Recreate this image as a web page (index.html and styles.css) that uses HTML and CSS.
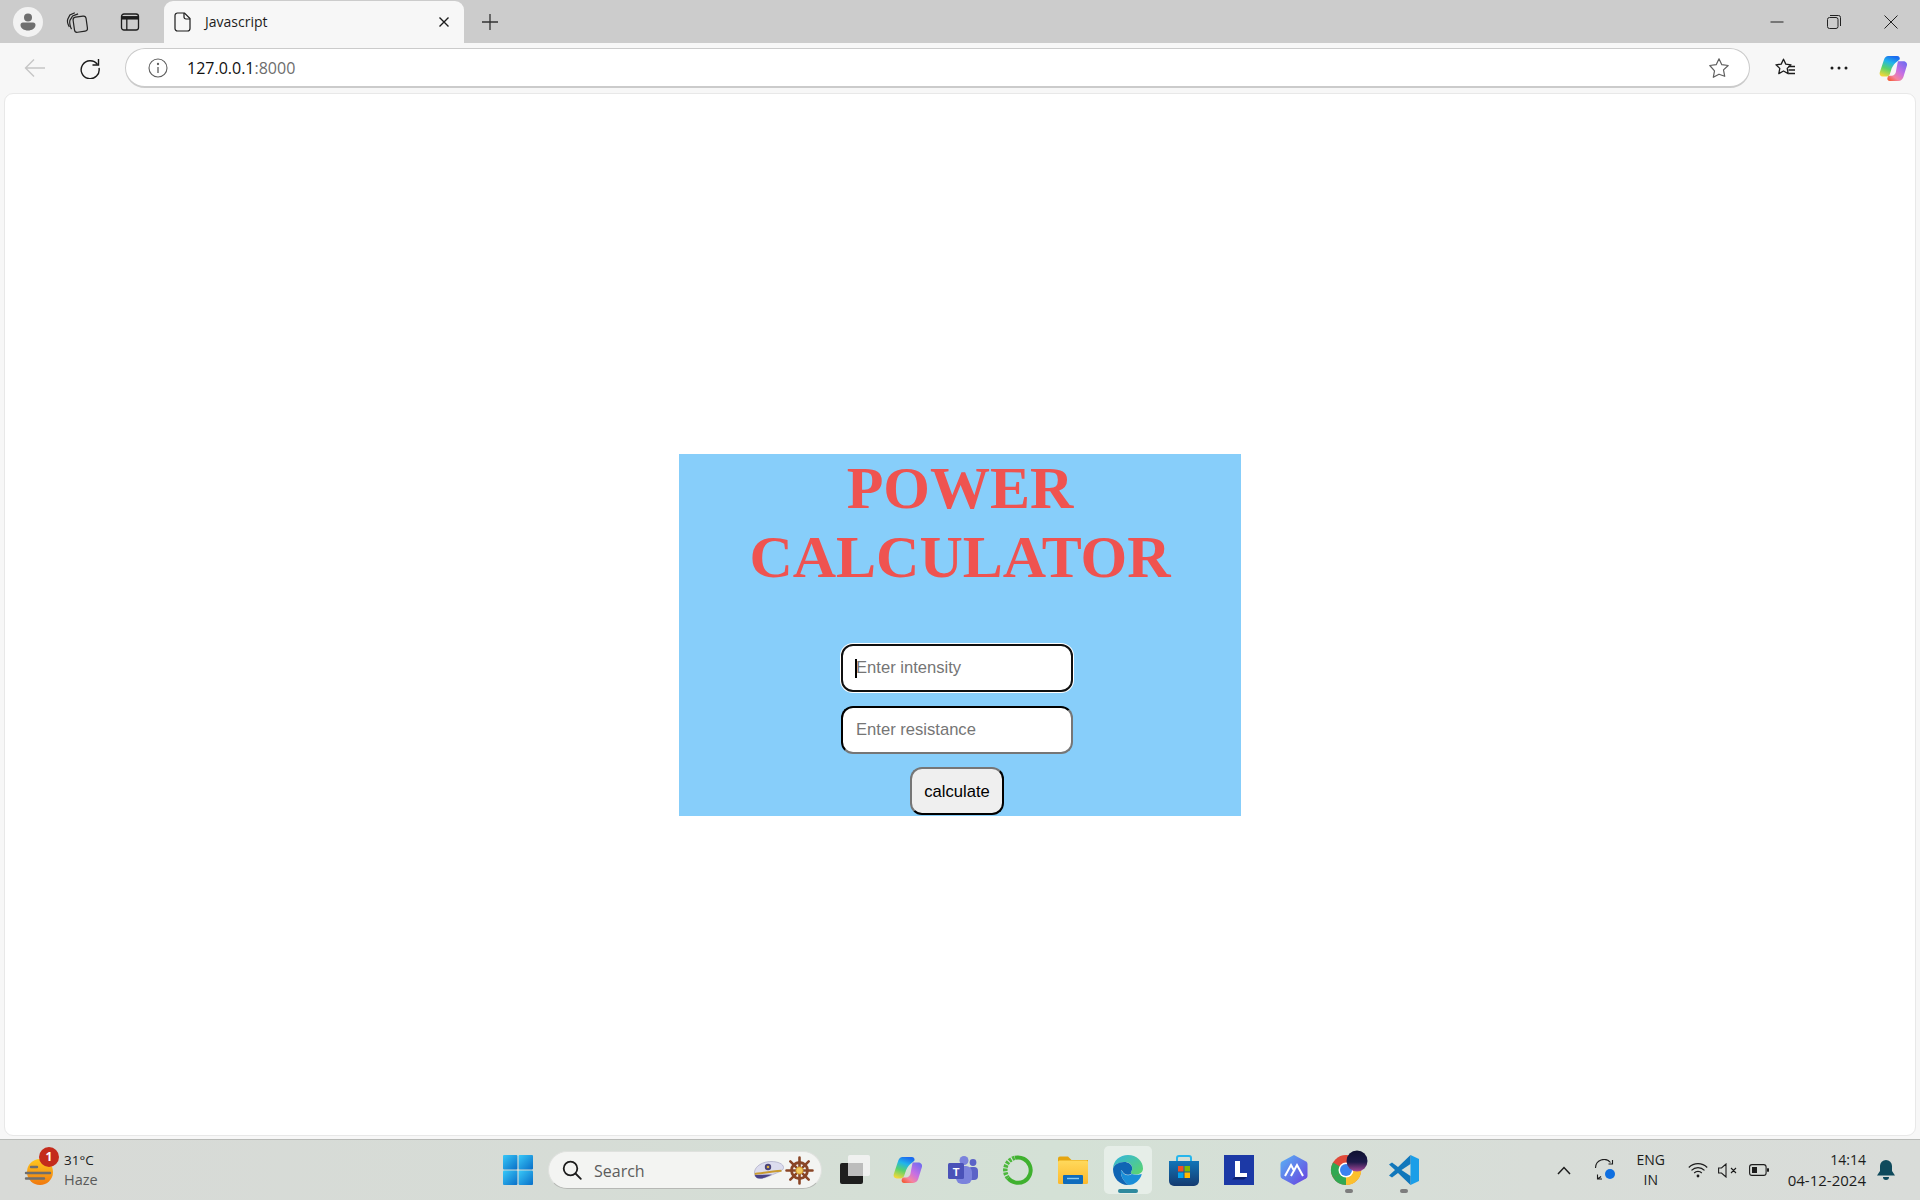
FILE: index.html
```html
<!DOCTYPE html>
<html lang="en">
<head>
<meta charset="utf-8">
<title>Javascript</title>
<link rel="stylesheet" href="styles.css">
</head>
<body>
<svg class="defs" width="0" height="0" aria-hidden="true">
  <defs>
    <linearGradient id="copA" x1=".6" y1="0" x2=".25" y2="1"><stop offset="0" stop-color="#1c6cf0"/><stop offset=".3" stop-color="#22b4ea"/><stop offset=".62" stop-color="#5ad26a"/><stop offset="1" stop-color="#f4d83a"/></linearGradient>
    <linearGradient id="copB" x1=".9" y1="0" x2=".1" y2="1"><stop offset="0" stop-color="#6d6cf0"/><stop offset=".45" stop-color="#c66fe4"/><stop offset=".75" stop-color="#f585a0"/><stop offset="1" stop-color="#f4582e"/></linearGradient>
    <linearGradient id="sun" x1="0" y1="0" x2="0" y2="1"><stop offset="0" stop-color="#ffc81e"/><stop offset="1" stop-color="#f0780f"/></linearGradient>
    <linearGradient id="win" x1="0" y1="0" x2="1" y2="1"><stop offset="0" stop-color="#38c8f8"/><stop offset="1" stop-color="#0a6fc8"/></linearGradient>
    <linearGradient id="folder" x1="0" y1="0" x2="0" y2="1"><stop offset="0" stop-color="#ffd95c"/><stop offset="1" stop-color="#fdb92c"/></linearGradient>
    <linearGradient id="edge" x1="0" y1="0" x2="1" y2="1"><stop offset="0" stop-color="#32b4e0"/><stop offset="1" stop-color="#5ed66a"/></linearGradient>
    <linearGradient id="store" x1="0" y1="0" x2="0" y2="1"><stop offset="0" stop-color="#1275b8"/><stop offset="1" stop-color="#143a70"/></linearGradient>
    <linearGradient id="hex" x1="0" y1="0" x2="1" y2="1"><stop offset="0" stop-color="#58b4f4"/><stop offset="1" stop-color="#6a3fe0"/></linearGradient>
    <linearGradient id="blob" x1="0" y1="0" x2="0" y2="1"><stop offset="0" stop-color="#0e1030"/><stop offset=".55" stop-color="#1d1a4a"/><stop offset="1" stop-color="#a8489a"/></linearGradient>
    <g id="copilot-shape">
      <path d="M21 7h6c2.500 0 4.500 2 4 4.500l-4 13c-.8 2.500-2.700 4.500-5.500 4.500H12c-2.200 0-3.300-2-2.700-3.800l1-2.200h3.500c2.500 0 4-1.500 4.700-3.500L20.500 9z" fill="url(#copB)"/>
      <path d="M10 1h10c2.500 0 3.500 2 2.800 4L18 9c-2 2-4 5-5 9l-1 3c-.7 2-2.200 3-4 3H4c-2.500 0-4-2-3.300-4.500L5.500 5C6.300 2.500 8 1 10 1z" fill="url(#copA)"/>
    </g>
  </defs>
</svg>

<header class="tabstrip">
  <div class="strip-left">
    <span class="avatar">
      <svg width="20" height="20" viewBox="0 0 20 20"><circle cx="10" cy="5.500" r="4" fill="#6f6f6f"/><path d="M2.500 13a2.500 2.500 0 0 1 2.500-2.500h10a2.500 2.500 0 0 1 2.500 2.500c0 3.400-3.600 5.500-7.500 5.500S2.500 16.400 2.500 13z" fill="#6f6f6f"/></svg>
    </span>
    <span class="strip-btn">
      <svg width="24" height="24" viewBox="0 0 22 22" fill="none" stroke="#222" stroke-width="1.100"><path d="M4 15.500C2.500 13 2 10 2.500 8.500L4.500 4.500 9 2.500"/><path d="M6 17.500C4.500 15 4 11 4.500 9.500L7 5.500 12 3.500"/><rect x="8" y="6" width="12" height="14" rx="2.500" transform="rotate(-8 14 13)"/></svg>
    </span>
    <span class="strip-btn">
      <svg width="20" height="20" viewBox="0 0 20 20" fill="none" stroke="#1c1c1c" stroke-width="1.300"><rect x="1.500" y="2" width="17" height="16" rx="2.500"/><path d="M1.500 5.800h17" stroke-width="3.500" stroke="#1c1c1c"/><path d="M6.800 6v12"/></svg>
    </span>
  </div>
  <div class="tab">
    <svg class="tab-doc" width="18" height="20" viewBox="0 0 18 20" fill="none" stroke="#1c1c1c" stroke-width="1.200"><path d="M3.500 1h7L16 6.500V16.500a2.500 2.500 0 0 1-2.500 2.500h-10A2.500 2.500 0 0 1 1 16.500v-13A2.500 2.500 0 0 1 3.500 1z"/><path d="M10 1v4a2 2 0 0 0 2 2h4"/></svg>
    <span class="tab-title">Javascript</span>
    <svg class="tab-close" width="12" height="12" viewBox="0 0 12 12" stroke="#1c1c1c" stroke-width="1.400"><path d="M1.500 1.500l9 9M10.500 1.500l-9 9"/></svg>
  </div>
  <span class="new-tab">
    <svg width="18" height="18" viewBox="0 0 18 18" stroke="#333" stroke-width="1.300"><path d="M9 1v16M1 9h16"/></svg>
  </span>
  <div class="win-controls">
    <svg width="14" height="14" viewBox="0 0 14 14" stroke="#222" stroke-width="1"><path d="M.500 7h13"/></svg>
    <svg width="14" height="14" viewBox="0 0 14 14" fill="none" stroke="#222" stroke-width="1"><rect x=".500" y="2.500" width="10.500" height="11" rx="2"/><path d="M3 .500h8.500a2 2 0 0 1 2 2V11"/></svg>
    <svg width="14" height="14" viewBox="0 0 14 14" stroke="#222" stroke-width="1"><path d="M.500 .500l13 13M13.500 .500l-13 13"/></svg>
  </div>
</header>

<nav class="toolbar">
  <span class="tool-btn back">
    <svg width="22" height="20" viewBox="0 0 22 20" fill="none" stroke="#c6c6c6" stroke-width="1.400"><path d="M21 10H1.500M10 1.500L1.500 10l8.500 8.500"/></svg>
  </span>
  <span class="tool-btn reload">
    <svg width="22" height="22" viewBox="0 0 22 22" fill="none" stroke="#1c1c1c" stroke-width="1.400"><path d="M18.500 7.500A9 9 0 1 0 20 11"/><path d="M19.500 2v6h-6"/></svg>
  </span>
  <div class="address">
    <svg class="addr-info" width="20" height="20" viewBox="0 0 20 20" fill="none" stroke="#5f5f5f" stroke-width="1.100"><circle cx="10" cy="10" r="9"/><path d="M10 9v6" stroke-width="1.300"/><circle cx="10" cy="6" r=".6" fill="#5f5f5f"/></svg>
    <span class="url"><span class="url-host">127.0.0.1</span><span class="url-port">:8000</span></span>
    <svg class="addr-star" width="22" height="22" viewBox="0 0 22 22" fill="none" stroke="#5f5f5f" stroke-width="1.200" stroke-linejoin="round"><path d="M11 1.800l2.800 5.900 6.400.8-4.700 4.400 1.200 6.400L11 17.200l-5.700 3.100 1.200-6.400L1.800 8.500l6.400-.8z"/></svg>
  </div>
  <span class="tool-btn fav">
    <svg width="22" height="22" viewBox="0 0 22 22" fill="none" stroke="#1c1c1c" stroke-width="1.300" stroke-linejoin="round"><path d="M9.500 2.200l2.300 4.900 5.200.7-3.800 3.600 1 5.200-4.700-2.600-4.700 2.600 1-5.200-3.800-3.600 5.200-.7z"/><path d="M14.500 9.500h6.500M14.500 13h6.500M14.500 16.500h6.500"/></svg>
  </span>
  <span class="tool-btn dots">
    <svg width="18" height="4" viewBox="0 0 18 4" fill="#1c1c1c"><circle cx="2" cy="2" r="1.500"/><circle cx="9" cy="2" r="1.500"/><circle cx="16" cy="2" r="1.500"/></svg>
  </span>
  <span class="tool-btn copilot">
    <svg width="29" height="27" viewBox="0 0 32 30"><use href="#copilot-shape"/></svg>
  </span>
</nav>

<main class="viewport">
  <section class="card">
    <h1 class="title">POWER<br>CALCULATOR</h1>
    <form class="form">
      <div class="field">
        <input class="entry entry-focus" type="text" placeholder="Enter intensity">
        <span class="caret"></span>
      </div>
      <input class="entry" type="text" placeholder="Enter resistance">
      <button class="calc" type="button">calculate</button>
    </form>
  </section>
</main>

<footer class="taskbar">
  <div class="weather">
    <span class="weather-icon">
      <svg width="30" height="30" viewBox="0 0 30 30"><circle cx="16" cy="16" r="13" fill="url(#sun)"/><g stroke="#6e6e6e" stroke-width="2.400" stroke-linecap="round"><path d="M7 11h6M2 17h24M2 22.500h18"/></g></svg>
      <span class="badge">1</span>
    </span>
    <span class="weather-text"><span class="temp">31°C</span><span class="cond">Haze</span></span>
  </div>

  <div class="apps">
    <span class="app app-win">
      <svg width="30" height="30" viewBox="0 0 30 30" fill="url(#win)"><rect x="0" y="0" width="14.400" height="14.400" rx="1"/><rect x="15.600" y="0" width="14.400" height="14.400" rx="1"/><rect x="0" y="15.600" width="14.400" height="14.400" rx="1"/><rect x="15.600" y="15.600" width="14.400" height="14.400" rx="1"/></svg>
    </span>
    <div class="search">
      <svg class="search-glass" width="20" height="20" viewBox="0 0 20 20" fill="none" stroke="#1c1c1c" stroke-width="1.800"><circle cx="8.500" cy="8.500" r="6.800"/><path d="M13.500 13.500L18.800 18.800" stroke-linecap="round"/></svg>
      <span class="search-label">Search</span>
      <svg class="search-hat" width="30" height="18" viewBox="0 0 30 18"><path d="M.500 11C1 5 9 .500 17 .500c7 0 12.500 2.500 12.500 6 0 2.500-3 4-7 5.500-5 1.800-11 5.500-17 5.500C2 17.500.2 15 .500 11z" fill="#dcdcee" stroke="#a8a8c4" stroke-width=".7"/><path d="M.800 13C8 12 18 10.500 27.500 9.800" fill="none" stroke="#c99a2e" stroke-width="2"/><path d="M.800 14C1.500 16.500 3 17.500 6 17.500c4 0 8-2 12-4z" fill="#4a4488"/><circle cx="14" cy="6" r="3.200" fill="#4a4378"/><circle cx="14" cy="6" r="1.300" fill="#e0b03a"/></svg>
      <svg class="search-wheel" width="29" height="29" viewBox="0 0 29 29" fill="none" stroke="#8a4526"><g stroke-width="2.600" stroke-linecap="round"><path d="M14.500 1.500v26M1.500 14.500h26M5.300 5.300l18.400 18.400M23.700 5.300L5.300 23.700"/></g><circle cx="14.500" cy="14.500" r="8" stroke-width="2.800"/><circle cx="14.500" cy="14.500" r="3.500" fill="#f0c860" stroke="#d8a030" stroke-width="1"/></svg>
    </div>
    <span class="app app-cube">
      <svg width="30" height="30" viewBox="0 0 30 30"><rect x="0" y="8" width="23" height="21" rx="2" fill="#1e1e1e"/><rect x="8" y="0" width="22" height="21" rx="2" fill="#f4f4f4" fill-opacity=".85"/><rect x="8" y="8" width="15" height="13" fill="#bdbdbd"/></svg>
    </span>
    <span class="app">
      <svg width="30" height="28" viewBox="0 0 32 30"><use href="#copilot-shape"/></svg>
    </span>
    <span class="app">
      <svg width="30" height="30" viewBox="0 0 30 30"><circle cx="25" cy="7.500" r="3.400" fill="#5b63c7"/><rect x="20" y="12" width="10" height="13" rx="4" fill="#5b63c7"/><circle cx="16" cy="5.500" r="4.500" fill="#7b83dc"/><rect x="8" y="11" width="16" height="18" rx="6" fill="#7b83dc"/><rect x="0" y="8" width="16" height="16" rx="1.500" fill="#4a52b8"/><text class="teams-t" x="8" y="20.500" text-anchor="middle">T</text></svg>
    </span>
    <span class="app">
      <svg width="30" height="30" viewBox="0 0 30 30" fill="none"><path d="M12 2.800A12.700 12.700 0 1 1 5 23" stroke="#3fb12f" stroke-width="4"/><path d="M5 23A12.700 12.700 0 0 1 12 2.800" stroke="#4cb83c" stroke-width="4.500" stroke-dasharray="2.600 1.100"/></svg>
    </span>
    <span class="app">
      <svg width="30" height="28" viewBox="0 0 30 28"><path d="M0 2.500A2 2 0 0 1 2 .500h8l3.500 3.500H30v6H0z" fill="#e5a50f"/><rect x="0" y="4.500" width="30" height="23.500" rx="1.500" fill="url(#folder)"/><rect x="5" y="19" width="20" height="9" rx="1" fill="#0f6cbd"/><path d="M9 22.500h12" stroke="#8ccbf0" stroke-width="1.400"/></svg>
    </span>
    <span class="app app-edge">
      <svg width="32" height="32" viewBox="0 0 32 32"><path d="M1 15C1 6.500 8 1 16 1c8.500 0 15 6 15 13.500 0 3.500-3 6-7 6-3 0-5.200-1-5.200-2.300 0-.8 1.400-1.200 1.400-3.700C20.200 10.500 17 8 13 8 6.500 8 1.500 11 1 15z" fill="url(#edge)"/><path d="M1 15c.5-4 5.500-7 11-7 4.500 0 8.200 2.500 8.200 6.500 0 2.500-1.400 2.900-1.400 3.700 0 .6.400 1 1 1.300-3.500 2.500-8 1-9.600-2.500C8.800 14 8 20 11 25c1.200 2 3 3.800 5.500 6C8 31.500 1 24.500 1 15z" fill="#1065b4"/><path d="M16.500 31c-2.500-2.200-4.300-4-5.500-6C8 20 8.800 14 10.200 17.500c1.600 3.500 6.100 5 9.600 2.500 3 1.200 7.500.8 10 0-1.500 6-7 11-13.300 11z" fill="#1a8ed8"/></svg>
      <span class="edge-bar"></span>
    </span>
    <span class="app">
      <svg width="30" height="32" viewBox="0 0 30 32"><path d="M8 7V4a2 2 0 0 1 2-2h10a2 2 0 0 1 2 2v3" fill="none" stroke="#27b6ec" stroke-width="2"/><path d="M0 7h30v20a5 5 0 0 1-5 5H5a5 5 0 0 1-5-5z" fill="url(#store)"/><rect x="9" y="12" width="5.500" height="5.500" fill="#f25022"/><rect x="15.500" y="12" width="5.500" height="5.500" fill="#7fba00"/><rect x="9" y="18.500" width="5.500" height="5.500" fill="#00a4ef"/><rect x="15.500" y="18.500" width="5.500" height="5.500" fill="#ffb900"/></svg>
    </span>
    <span class="app">
      <svg width="30" height="30" viewBox="0 0 30 30"><rect width="30" height="30" fill="#1c39a6"/><path d="M11 6h5v12h7v4H11z" fill="#fff"/><path d="M11 22h12l-3 2.500H8z" fill="#0c1f6c"/></svg>
    </span>
    <span class="app">
      <svg width="28" height="30" viewBox="0 0 28 30"><path d="M14 0l12 6.500a3 3 0 0 1 1.500 2.500v12a3 3 0 0 1-1.500 2.500L14 30 2 23.500A3 3 0 0 1 .500 21V9A3 3 0 0 1 2 6.500z" fill="url(#hex)"/><path d="M5 21l6-11 3.500 6.500M11 21l6-11 6 11" fill="none" stroke="#fff" stroke-width="2"/></svg>
    </span>
    <span class="app app-chrome">
      <svg width="48" height="40" viewBox="0 0 48 40"><g transform="translate(5 8)"><circle cx="15" cy="15" r="15" fill="#e04a3a"/><path d="M15 15L2 22.500A15 15 0 0 0 15 30z" fill="#31a852"/><path d="M2 7.500A15 15 0 0 0 2 22.500L15 15z" fill="#31a852"/><path d="M15 15l15-3a15 15 0 0 1-15 18z" fill="#fbc02d"/><circle cx="15" cy="15" r="7.500" fill="#fff"/><circle cx="15" cy="15" r="6" fill="#3a82f0"/></g><circle cx="31" cy="14" r="10.500" fill="url(#blob)"/></svg>
      <span class="run-dot"></span>
    </span>
    <span class="app app-code">
      <svg width="30" height="30" viewBox="0 0 30 30"><path d="M21.500 0l8.500 4v22l-8.500 4z" fill="#1b9ee8"/><path d="M21.500 0L9 12 3 7.500 0 9.500 6 15l-6 5.500 3 2L9 18l12.500 12V21L12.500 15l9-6z" fill="#1177bb"/></svg>
      <span class="run-dot"></span>
    </span>
  </div>

  <div class="tray">
    <svg class="tray-chev" width="14" height="9" viewBox="0 0 14 9" fill="none" stroke="#1c1c1c" stroke-width="1.500"><path d="M1 8l6-6.500L13 8"/></svg>
    <svg class="tray-sync" width="22" height="22" viewBox="0 0 22 22" fill="none" stroke="#1c1c1c" stroke-width="1.100"><path d="M1.500 9A8.500 8.500 0 0 1 16.500 3.500M18.500 1v4h-4M8 20H3.500v-4.500M3.500 19.500A8 8 0 0 0 7 17.500"/><circle cx="16" cy="15" r="5" fill="#0f6fe0" stroke="none"/></svg>
    <span class="lang"><span>ENG</span><span>IN</span></span>
    <svg class="tray-wifi" width="20" height="16" viewBox="0 0 20 16" fill="none" stroke="#1c1c1c" stroke-width="1.200"><path d="M.800 5.500a13 13 0 0 1 18.400 0M3.500 8.300a9.200 9.200 0 0 1 13 0M6.200 11a5.400 5.400 0 0 1 7.600 0"/><circle cx="10" cy="14" r="1.400" fill="#1c1c1c" stroke="none"/></svg>
    <svg class="tray-vol" width="20" height="15" viewBox="0 0 20 15" fill="none" stroke="#1c1c1c" stroke-width="1.100"><path d="M.600 5h2.900L8 1v13L3.500 10H.600zM13 5l5 5M18 5l-5 5"/></svg>
    <svg class="tray-bat" width="20" height="12" viewBox="0 0 20 12" fill="none" stroke="#1c1c1c" stroke-width="1.100"><rect x=".600" y=".600" width="16.500" height="10.800" rx="2.400"/><rect x="3" y="3" width="5" height="6" fill="#1c1c1c" stroke="none"/><rect x="18" y="4.300" width="2" height="3.400" fill="#1c1c1c" stroke="none"/></svg>
    <span class="clock"><span class="clock-time">14:14</span><span class="clock-date">04-12-2024</span></span>
    <svg class="tray-bell" width="18" height="20" viewBox="0 0 18 20" fill="#0f4a5c"><path d="M9 0a6 6 0 0 1 6 6v5l3 4.500H0L3 11V6a6 6 0 0 1 6-6z"/><path d="M6 17h6a3 3 0 0 1-6 0z"/></svg>
  </div>
</footer>
</body>
</html>
```

FILE: styles.css
```css
* { box-sizing: border-box; }

html, body { margin: 0; height: 100%; }

body {
  width: 1920px;
  height: 1200px;
  overflow: hidden;
  display: flex;
  flex-direction: column;
  background: #f7f7f7;
  font-family: "Open Sans", "Liberation Sans", sans-serif;
  color: #1c1c1c;
}

.defs { display: block; height: 0; }

/* Tab strip */
.tabstrip {
  height: 43px;
  flex: none;
  display: flex;
  align-items: flex-end;
  background: #cccccc;
}

.strip-left {
  width: 164px;
  height: 43px;
  display: flex;
  align-items: center;
  padding-left: 13px;
}

.avatar {
  width: 30px;
  height: 30px;
  margin-right: 7px;
  border-radius: 50%;
  background: #f2f2f2;
  display: flex;
  align-items: center;
  justify-content: center;
  flex: none;
}

.strip-btn {
  display: flex;
  align-items: center;
  justify-content: center;
  width: 53px;
  flex: none;
}

.tab {
  width: 300px;
  height: 42px;
  background: #f7f7f7;
  border-radius: 9px 9px 0 0;
  display: flex;
  align-items: center;
  padding: 0 14px 0 10px;
}

.tab-doc { flex: none; }

.tab-title {
  margin: 0 0 2px 13px;
  flex: 1;
  font-size: 14px;
}

.new-tab {
  margin-left: 17px;
  height: 43px;
  display: flex;
  align-items: center;
}

.win-controls {
  margin-left: auto;
  width: 174px;
  height: 43px;
  padding: 0 22px 0 24px;
  display: flex;
  align-items: center;
  justify-content: space-between;
}

/* Toolbar */
.toolbar {
  height: 50px;
  flex: none;
  display: flex;
  align-items: center;
  background: #f7f7f7;
  padding-left: 24px;
}

.tool-btn {
  display: flex;
  align-items: center;
  justify-content: center;
  flex: none;
}

.back { width: 22px; }
.reload { width: 22px; margin-left: 33px; }

.address {
  margin-left: 24px;
  width: 1625px;
  height: 40px;
  flex: none;
  background: #ffffff;
  border: 1px solid #cbcbcb;
  border-bottom-width: 2px;
  border-radius: 20px;
  display: flex;
  align-items: center;
  padding: 0 19px 0 22px;
}

.url {
  margin-left: 19px;
  font-family: "Open Sans", sans-serif;
  font-size: 16px;
  letter-spacing: 0;
}

.url-host { color: #111111; }
.url-port { color: #6d6d6d; }
.addr-star { margin-left: auto; }

.fav { width: 22px; margin-left: 24px; }
.dots { width: 18px; margin-left: 34px; }
.copilot { width: 29px; margin-left: 31px; }

/* Page */
.viewport {
  height: 1043px;
  flex: none;
  margin: 0 4px;
  background: #ffffff;
  border: 1px solid #e8e8e8;
  border-radius: 9px;
  padding-top: 360px;
  display: flex;
  justify-content: center;
  align-items: flex-start;
}

.card {
  width: 562px;
  height: 362px;
  background: #87cefa;
}

.title {
  margin: 0;
  text-align: center;
  font-family: "Liberation Serif", serif;
  font-size: 60px;
  font-weight: 700;
  line-height: 69px;
  color: #ef5350;
}

.form {
  margin-top: 52px;
  padding-right: 6px;
  display: flex;
  flex-direction: column;
  align-items: center;
  gap: 14px;
}

.field { position: relative; height: 48px; }

.entry {
  display: block;
  width: 232px;
  height: 48px;
  padding: 0 12px 0 13px;
  background: #ffffff;
  border: 2px inset #767676;
  border-top-color: #222;
  border-left-color: #222;
  border-radius: 12px;
  font-family: "Liberation Sans", sans-serif;
  font-size: 16.600px;
  color: #111;
  outline: none;
}

.entry::placeholder { color: #757575; opacity: 1; }

.entry-focus {
  border: 2px solid #101010;
  box-shadow: 0 0 0 1px #ffffff;
}

.caret {
  position: absolute;
  left: 14px;
  top: 15px;
  width: 2px;
  height: 19px;
  background: #000000;
}

.calc {
  width: 94px;
  height: 48px;
  padding: 1px 0 0;
  margin-top: -1px;
  background: #efefef;
  border: 2px outset #767676;
  border-right-color: #111;
  border-bottom-color: #111;
  border-radius: 12px;
  font-family: "Liberation Sans", sans-serif;
  font-size: 16.600px;
  color: #000000;
}

/* Taskbar */
.taskbar {
  margin-top: 3px;
  height: 61px;
  flex: none;
  position: relative;
  display: flex;
  align-items: center;
  border-top: 1px solid #b9bbb8;
  background: linear-gradient(90deg, #d8dad7 0%, #d6dcd6 30%, #d4e1d6 55%, #d8ddd8 80%, #d9dcd9 100%);
}

.weather {
  width: 488px;
  flex: none;
  display: flex;
  align-items: center;
  padding-left: 24px;
}

.weather-icon { position: relative; width: 30px; height: 30px; margin-top: 2px; }
.weather-icon svg { display: block; }

.badge {
  position: absolute;
  top: -9px;
  left: 15px;
  width: 20px;
  height: 20px;
  border-radius: 50%;
  background: #c42b1c;
  color: #ffffff;
  font-size: 12px;
  font-weight: 700;
  line-height: 20px;
  text-align: center;
}

.weather-text {
  margin: 0 0 1px 10px;
  display: flex;
  flex-direction: column;
  font-size: 13.500px;
  line-height: 20px;
}

.cond { color: #5a5a5a; font-size: 14.500px; }

.apps {
  display: flex;
  align-items: center;
  height: 60px;
}

.app {
  position: relative;
  width: 55px;
  height: 48px;
  flex: none;
  display: flex;
  align-items: center;
  justify-content: center;
}

.app-win { justify-content: flex-start; padding-left: 15px; width: 60px; }
.app-cube { width: 50px; margin-left: 8px; }
.app-edge {
  width: 48px;
  margin: 0 4px;
  background: #e6eee8;
  border-radius: 5px;
}

.edge-bar {
  position: absolute;
  bottom: 1px;
  left: 14px;
  width: 20px;
  height: 4px;
  border-radius: 2px;
  background: #2f8a9e;
}

.run-dot {
  position: absolute;
  bottom: 1px;
  left: 50%;
  width: 8px;
  height: 4px;
  margin-left: -4px;
  border-radius: 2px;
  background: #7d7d7d;
}

.app-chrome svg { margin: -6px 0 0 3px; }

.teams-t {
  font-family: "Liberation Sans", sans-serif;
  font-size: 11px;
  font-weight: 700;
  fill: #ffffff;
}

.search {
  width: 274px;
  height: 38px;
  flex: none;
  border-radius: 19px;
  background: #f3f4f2;
  border: 1px solid #dfe1de;
  border-bottom: 1px solid #b6b8b5;
  display: flex;
  align-items: center;
  padding: 0 7px 0 13px;
}

.search-label {
  margin: 1px 0 0 12px;
  font-size: 16px;
  color: #5c5c5c;
}

.search-hat { margin-left: auto; }
.search-wheel { margin-left: 1px; }

.tray {
  margin-left: auto;
  display: flex;
  align-items: center;
  padding-right: 25px;
}

.tray-chev { margin-right: 23px; }
.tray-sync { margin-right: 15px; }

.lang {
  width: 40px;
  display: flex;
  flex-direction: column;
  align-items: center;
  font-size: 14px;
  line-height: 20px;
  margin-right: 17px;
}

.tray-wifi { margin-right: 10px; }
.tray-vol { margin-right: 11px; }
.tray-bat { margin-right: 19px; }

.clock {
  display: flex;
  flex-direction: column;
  align-items: flex-end;
  line-height: 20px;
  margin: 0 11px 1px 0;
}

.clock-time { font-size: 14px; }
.clock-date { font-size: 15px; }
```
